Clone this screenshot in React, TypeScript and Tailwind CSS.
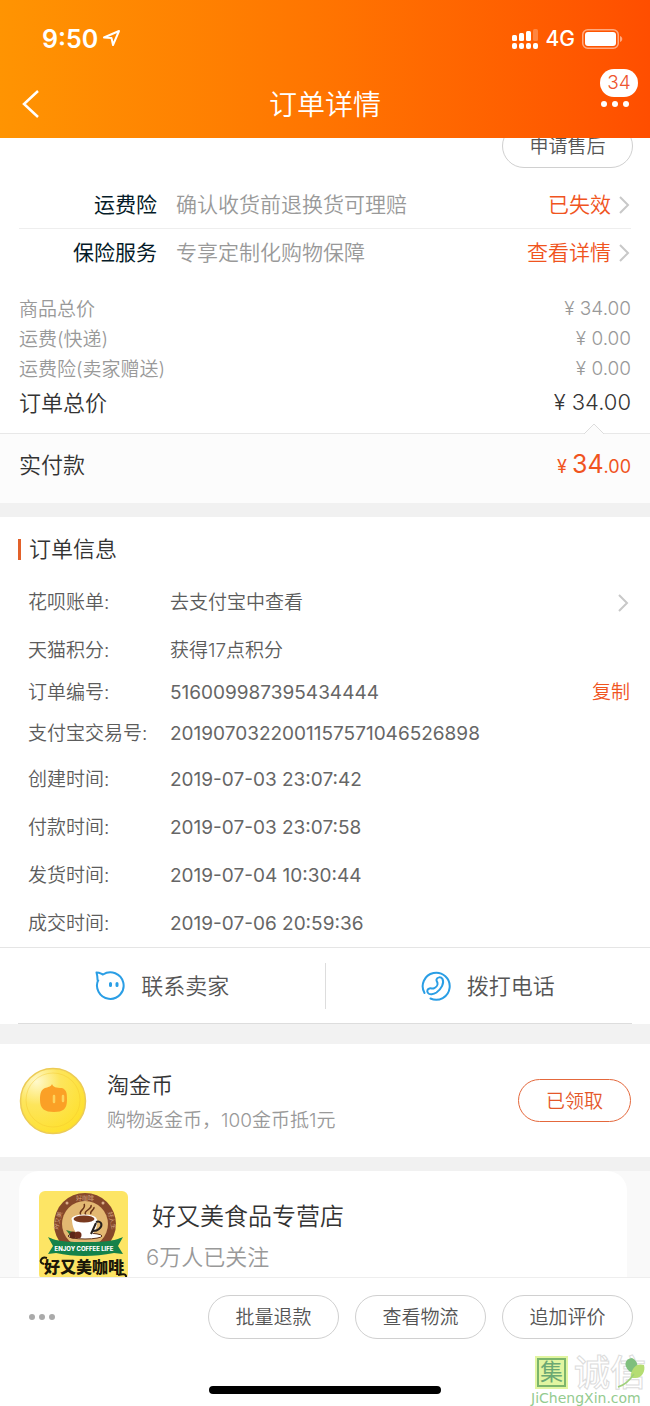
const PRICES = [
  { label: "商品总价", price: "34.00" },
  { label: "运费(快递)", price: "0.00" },
  { label: "运费险(卖家赠送)", price: "0.00" },
];

const NUMBERS = [
  { label: "订单编号:", value: "516009987395434444", copy: true },
  { label: "支付宝交易号:", value: "2019070322001157571046526898" },
];

const TIMES = [
  { label: "创建时间:", value: "2019-07-03 23:07:42" },
  { label: "付款时间:", value: "2019-07-03 23:07:58" },
  { label: "发货时间:", value: "2019-07-04 10:30:44" },
  { label: "成交时间:", value: "2019-07-06 20:59:36" },
];

const ACTIONS = ["批量退款", "查看物流", "追加评价"];

const Chevron = () => (
  <svg width="12" height="18" viewBox="0 0 12 18" fill="none" stroke="#c8c8c8" strokeWidth="2">
    <path d="M1 1 9 9l-8 8" />
  </svg>
);

const PillButton = ({ text }: { text: string }) => (
  <button className="h-11 w-[131px] rounded-full border border-[#d0d0d0] bg-white pt-[3px] text-[19px] text-[#555]">
    {text}
  </button>
);

const Header = () => (
  <header className="shrink-0 bg-linear-to-r from-[#ff9402] to-[#ff4e00] pb-[2px] text-white">
    {/* Status bar */}
    <div className="flex h-[72px] items-center justify-between pt-[6px] pr-[27px] pl-[42px]">
      <div className="flex items-center gap-1">
        <span className="pt-px text-[25px] font-semibold">9:50</span>
        <svg width="20" height="20" viewBox="0 0 20 20" fill="none" stroke="white" strokeWidth="2" strokeLinejoin="round">
          <path d="M2 8.500 17 2l-6 14-1.500-7z" />
        </svg>
      </div>
      <div className="flex items-center gap-[7px]">
        <svg width="27" height="20" viewBox="0 0 27 20" fill="white">
          <rect x="0" y="6" width="5" height="6" rx="1.500" />
          <rect x="7" y="4" width="5" height="8" rx="1.500" />
          <rect x="14" y="2" width="5" height="10" rx="1.500" />
          <rect x="21" y="0" width="5" height="12" rx="1.500" opacity=".25" />
          <rect x="0" y="14" width="5" height="6" rx="2" />
          <rect x="7" y="14" width="5" height="6" rx="2" />
          <rect x="14" y="14" width="5" height="6" rx="2" />
          <rect x="21" y="14" width="5" height="6" rx="2" />
        </svg>
        <span className="text-[21px] font-medium">4G</span>
        <svg width="41" height="20" viewBox="0 0 41 20">
          <rect x=".75" y=".75" width="35.500" height="18.500" rx="5" fill="none" stroke="white" strokeOpacity=".5" strokeWidth="1.500" />
          <rect x="3" y="3" width="31" height="14" rx="3" fill="white" />
          <path d="M38 7c3 1 3 5 0 6z" fill="white" opacity=".5" />
        </svg>
      </div>
    </div>

    <div className="flex h-16 items-center justify-between pr-[15px] pl-5">
      <button aria-label="返回" className="w-[35px]">
        <svg width="20" height="30" viewBox="0 0 20 30" fill="none" stroke="white" strokeWidth="2.500">
          <path d="M18 2 4 15 18 28" />
        </svg>
      </button>
      <h1 className="pt-[2px] text-[28px]">订单详情</h1>
      <button aria-label="更多" className="relative flex h-8 w-10 items-center justify-center gap-[5px]">
        <span className="size-[6px] rounded-full bg-white" />
        <span className="size-[6px] rounded-full bg-white" />
        <span className="size-[6px] rounded-full bg-white" />
        <span className="absolute -top-[19px] -right-[3px] flex h-7 w-[38px] items-center justify-center rounded-full bg-white text-[19px] text-[#ee5530]">
          34
        </span>
      </button>
    </div>
  </header>
);

const Insurance = () => (
  <section className="px-[19px] text-[21px]">
    <a href="#freight" className="flex h-[47px] items-center border-b border-[#eee]">
      <span className="w-[138px] text-right font-normal text-[#051b28]">运费险</span>
      <span className="ml-[19px] flex-1 text-[#999]">确认收货前退换货可理赔</span>
      <span className="mr-2 text-[#f0541e]">已失效</span>
      <Chevron />
    </a>
    <a href="#service" className="flex h-12 items-center">
      <span className="w-[138px] text-right font-normal text-[#051b28]">保险服务</span>
      <span className="ml-[19px] flex-1 text-[#999]">专享定制化购物保障</span>
      <span className="mr-2 text-[#f0541e]">查看详情</span>
      <Chevron />
    </a>
  </section>
);

const Prices = () => (
  <section className="pt-[17px]">
    <dl className="px-[19px] pb-[13px]">
      {PRICES.map((row) => (
        <div key={row.label} className="flex h-[30px] items-center justify-between text-[19px] text-[#999]">
          <dt className="pt-[2px]">{row.label}</dt>
          <dd>¥ {row.price}</dd>
        </div>
      ))}
      <div className="flex h-9 items-center justify-between text-[22px] text-[#333]">
        <dt className="pt-[2px]">订单总价</dt>
        <dd>¥ 34.00</dd>
      </div>
    </dl>
    <div className="relative flex h-[70px] items-center justify-between border-t border-[#e8e8e8] bg-[#fcfcfc] px-[19px] pb-2">
      <svg className="absolute right-[46px] -top-[11px]" width="20" height="12" viewBox="0 0 20 12">
        <path d="M0 11 10 1l10 10" fill="#fcfcfc" stroke="#ddd" />
      </svg>
      <span className="pt-[2px] text-[22px] text-[#333]">实付款</span>
      <span className="text-lg font-normal text-[#f0541e]">
        ¥ <span className="text-[25px]">34</span>.00
      </span>
    </div>
  </section>
);

const OrderInfo = () => (
  <section className="text-[19px] text-[#5c5c5c]">
    <h2 className="flex h-[61px] items-center gap-2 pt-[3px] pl-[18px] text-[22px] text-[#333]">
      <span className="h-[21px] w-[3px] bg-[#e2612a]" />
      订单信息
    </h2>
    <dl className="pr-5 pl-7">
      <div className="flex h-12 items-center pt-[2px]">
        <dt className="w-[142px]">花呗账单:</dt>
        <dd className="flex flex-1 items-center justify-between">
          <a href="#alipay">去支付宝中查看</a>
          <Chevron />
        </dd>
      </div>
      <div className="flex h-[45px] items-center pt-[6px]">
        <dt className="w-[142px]">天猫积分:</dt>
        <dd>获得17点积分</dd>
      </div>
      {NUMBERS.map((row) => (
        <div key={row.label} className="flex h-[41px] items-center pt-[3px]">
          <dt className="w-[142px]">{row.label}</dt>
          <dd className="flex-1 font-normal text-[#666]">{row.value}</dd>
          {row.copy && <dd><button className="text-[#f0541e]">复制</button></dd>}
        </div>
      ))}
      <div className="pt-[2px]">
        {TIMES.map((row) => (
          <div key={row.label} className="flex h-12 items-center pt-[3px]">
            <dt className="w-[142px]">{row.label}</dt>
            <dd className="font-normal text-[#666]">{row.value}</dd>
          </div>
        ))}
      </div>
    </dl>
  </section>
);

const Contact = () => (
  <section className="border-t border-[#e5e5e5] text-[22px] text-[#555]">
    <div className="flex h-[75px] items-center">
      <button className="flex h-[46px] flex-1 items-center justify-center gap-4 border-r border-[#ddd]">
        <svg width="30" height="30" viewBox="0 0 30 30" fill="none" stroke="#2a9ee5" strokeWidth="2">
          <path d="M2.500 9.500C2.700 6 2.200 4 1.500 1.500c2.500 0 4 .8 5.500 1.500l1.500.8M8 3.500A13.300 13.300 0 1 1 3.500 8.500" strokeLinejoin="round" />
          <path d="M15.500 12.500v2M22 12.500v2" strokeWidth="3" strokeLinecap="round" />
        </svg>
        <span className="pt-[2px]">联系卖家</span>
      </button>
      <button className="flex h-[46px] flex-1 items-center justify-center gap-4">
        <svg width="30" height="30" viewBox="0 0 30 30" fill="none" stroke="#2a9ee5" strokeWidth="2" strokeLinecap="round">
          <path d="M3.500 22A13.500 13.500 0 1 1 9.500 27.500" />
          <path d="M15.500 8.500c.5-2.500 4.500-3 6-.5 2 4-1 10-6 13.500-3 2-7 2.500-8.500.5s-.5-4 1.500-4.500 2.500.5 4 0c2.500-1 4.500-3.500 4-5.500-.3-1.200-1.300-2-1-3.500z" />
        </svg>
        <span className="pt-[2px]">拨打电话</span>
      </button>
    </div>
    <div className="mx-[18px] h-px bg-[#ddd]" />
  </section>
);

const Coins = () => (
  <section className="flex h-[113px] items-center px-[19px]">
    <svg width="68" height="68" viewBox="0 0 68 68">
      <defs>
        <radialGradient id="gold" cx=".25" cy=".2" r=".9">
          <stop offset="0" stopColor="#fff9cc" />
          <stop offset=".4" stopColor="#fde55c" />
          <stop offset="1" stopColor="#fee02a" />
        </radialGradient>
      </defs>
      <circle cx="34" cy="34" r="32.500" fill="url(#gold)" stroke="#eccb55" strokeWidth="1.500" />
      <circle cx="34" cy="33" r="27" fill="none" stroke="#f3c52c" strokeOpacity=".4" />
      <path d="M33 17c1 3 4 4 10 4 5 2 5 6 5 12 0 9-4 12-13 12s-14-3-14-12c0-7 1-10 5-12 3-1 6-1 7-4z" fill="#fba026" />
      <path d="M35 29v6M44 29v5" stroke="#fdd35c" strokeWidth="2.500" strokeLinecap="round" />
    </svg>
    <div className="ml-5 flex-1 pt-[2px]">
      <h3 className="text-[22px] leading-9 text-[#333]">淘金币</h3>
      <p className="pt-[2px] text-[19px] leading-8 text-[#999]">购物返金币，100金币抵1元</p>
    </div>
    <button className="h-[43px] w-[113px] rounded-full border border-[#e4683c] pt-[3px] text-[19px] text-[#e4572a]">
      已领取
    </button>
  </section>
);

const StoreLogo = () => (
  <svg className="rounded-md" width="89" height="89" viewBox="0 0 89 89">
    <rect width="89" height="89" fill="#fde565" />
    <circle cx="46" cy="33" r="31" fill="#86472a" />
    <circle cx="46" cy="33" r="23" fill="#e3b872" />
    <g fill="#dcae8c" fontSize="6" textAnchor="middle">
      <text x="46" y="9">好咖啡</text>
      <text x="21" y="30" transform="rotate(-75 21 30)">好又美</text>
      <text x="71" y="30" transform="rotate(75 71 30)">好人生</text>
      <circle cx="28" cy="12" r="1.500" />
      <circle cx="64" cy="12" r="1.500" />
    </g>
    <path d="M42 24c-4-4 6-6 3-11M47 24c-4-4 7-6 5-10M52 23c-2-3 4-4 3-7" fill="none" stroke="#6b3519" strokeWidth="1.500" />
    <ellipse cx="46" cy="45" rx="17" ry="3" fill="#fff" stroke="#5a3018" />
    <path d="M33 28h25c1 9-3 16-9 17h-7c-6-2-9-9-9-17z" fill="#fff" />
    <path d="M57 31c6-2 7 4 3 7-2 2-4 2-6 2M57 32l-5 11" fill="none" stroke="#27201d" strokeWidth="2" />
    <ellipse cx="45" cy="28" rx="12.500" ry="4.500" fill="#fff" />
    <ellipse cx="45" cy="28" rx="10.500" ry="3.500" fill="#79391e" />
    <path d="m27 39 7 2-3 3z" fill="#2e7b38" />
    <circle cx="34" cy="44" r="3.500" fill="#5a2617" />
    <circle cx="39" cy="44" r="3.500" fill="#6f2d1a" />
    <path d="M9 46c8 4 16 5 37 5s29-1 38-5l-5 9 5 8-9-1c-20 4-40 4-58 0l-8 1 5-8z" fill="#15824a" />
    <text x="45" y="60" fill="#fff" fontSize="6" fontWeight="800" textAnchor="middle">ENJOY COFFEE LIFE</text>
    <text x="45" y="82" fill="#1b1709" fontSize="16" fontWeight="900" textAnchor="middle">好又美咖啡</text>
    <path d="M8 67c-6-2-9 5-3 6M79 84c4-1 9-2 8 3" fill="none" stroke="#1b1709" strokeWidth="2" />
  </svg>
);

const Store = () => (
  <section className="bg-[#f9f9f9] pr-[23px] pl-[19px]">
    <div className="flex rounded-[20px] bg-white p-5">
      <StoreLogo />
      <div className="ml-[18px]">
        <h3 className="pt-[6px] pl-[6px] text-2xl leading-10 text-[#333]">好又美食品专营店</h3>
        <p className="text-[22px] leading-10 text-[#999]">6万人已关注</p>
      </div>
    </div>
  </section>
);

const Watermark = () => (
  <div className="absolute right-0 bottom-0 w-[119px]">
    <div className="flex items-center gap-[6px] pl-1">
      <span className="flex size-[33px] items-center justify-center bg-[#e1f5a0]">
        <span className="flex size-[29px] items-center justify-center border-2 border-[#7cb56c] text-[23px] leading-none font-normal text-[#6ba873]">
          集
        </span>
      </span>
      <span className="text-[36px] leading-8 font-medium whitespace-nowrap text-white [-webkit-text-stroke:1px_#dcdcdc]">诚信</span>
    </div>
    <svg className="absolute top-0 right-1" width="30" height="34" viewBox="0 0 30 34">
      <path d="M13 15C7 9 9 3 16 2c6 3 7 8 3 16z" fill="#7fbf7d" />
      <path d="M15 18c2-8 7-11 13-9 2 7-3 14-10 13-3 0-4-1-3-4z" fill="#b5dd72" />
      <path d="M18 18c-4 6-9 11-16 13" fill="none" stroke="#9fd07a" strokeWidth="1.500" />
    </svg>
    <p className="pt-px font-['DejaVu_Sans'] text-sm leading-4 font-normal text-[#94cb8f]">JiChengXin.com</p>
  </div>
);

const Footer = () => (
  <footer className="relative shrink-0 border-t border-[#eee] bg-white pt-[17px] pb-3">
    <div className="flex items-center justify-between pr-[17px] pl-[29px]">
      <button aria-label="更多操作" className="flex h-11 items-center gap-1">
        <span className="size-[6px] rounded-full bg-[#aaa]" />
        <span className="size-[6px] rounded-full bg-[#aaa]" />
        <span className="size-[6px] rounded-full bg-[#aaa]" />
      </button>
      <div className="flex gap-4">
        {ACTIONS.map((text) => (
          <PillButton key={text} text={text} />
        ))}
      </div>
    </div>
    <div className="mx-auto mt-[47px] h-2 w-[232px] rounded-full bg-black" />
    <Watermark />
  </footer>
);

const App = () => {
  return (
    <div className="flex h-screen flex-col overflow-hidden bg-white font-['Inter','Noto_Sans_CJK_SC',sans-serif] font-[350]">
      <Header />
      <main className="min-h-0 flex-1 overflow-hidden">
        <div className="-mt-[14px] flex justify-end pr-[17px] pb-[14px]">
          <PillButton text="申请售后" />
        </div>
        <Insurance />
        <Prices />
        <div className="h-[14px] bg-[#f1f1f1]" />
        <OrderInfo />
        <Contact />
        <div className="h-5 bg-[#f2f2f2]" />
        <Coins />
        <div className="h-[14px] bg-[#f1f1f1]" />
        <Store />
      </main>
      <Footer />
    </div>
  );
};
export default App;
